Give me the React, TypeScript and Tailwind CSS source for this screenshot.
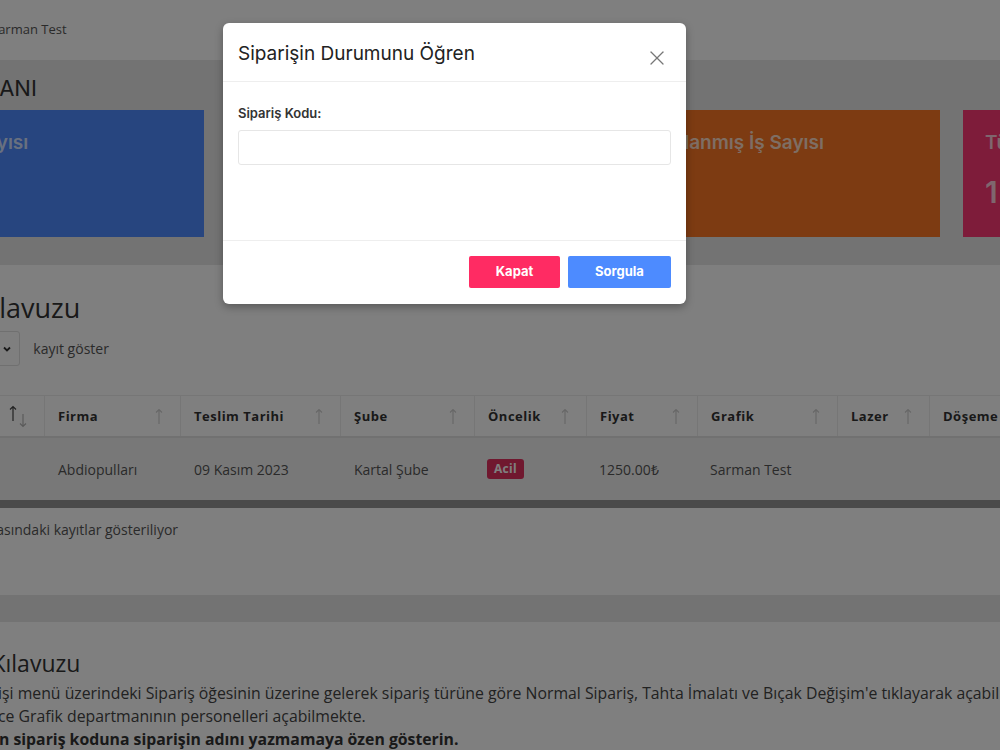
import { X } from "lucide-react";

const COLUMNS = [
  { label: "Sipariş Kodu", width: "w-[165px]", active: true },
  { label: "Firma", width: "w-[136px]" },
  { label: "Teslim Tarihi", width: "w-[160px]" },
  { label: "Şube", width: "w-[134px]" },
  { label: "Öncelik", width: "w-[112px]" },
  { label: "Fiyat", width: "w-[111px]" },
  { label: "Grafik", width: "w-[140px]" },
  { label: "Lazer", width: "w-[92px]" },
  { label: "Döşeme", width: "w-[130px]" },
  { label: "Durum", width: "w-[130px]" },
];

const CARDS = [
  { title: "Toplam İş Sayısı", value: "3", bg: "bg-[#4e8afe]" },
  { title: "Devam Eden İş Sayısı", value: "2", bg: "bg-[#22b573]" },
  { title: "Tamamlanmış İş Sayısı", value: "0", bg: "bg-[#fa7624]" },
  { title: "Tüm Siparişler", value: "1", bg: "bg-[#fc3874]" },
];

function SortArrows({ active }: { active?: boolean }) {
  return (
    <span className="flex items-start gap-[2px]">
      <svg width="8" height="17" viewBox="0 0 8 17" className={active ? "text-[#444]" : "text-[#cfcfcf]"}>
        <path d="M4 1.5 V16 M1 4.5 L4 1.5 L7 4.5" fill="none" stroke="currentColor" strokeWidth="1.2" />
      </svg>
      {active && (
        <svg width="8" height="14" viewBox="0 0 8 14" className="text-[#b5b5b5] mt-[9px]">
          <path d="M4 0 V12.5 M1 9.5 L4 12.5 L7 9.5" fill="none" stroke="currentColor" strokeWidth="1.2" />
        </svg>
      )}
    </span>
  );
}

function OrderTable() {
  return (
    <div className="w-[1400px]">
      <div className="flex h-[43px] border-t border-[#ececec] border-b-2 border-b-[#e2e2e2]">
        {COLUMNS.map((c) => (
          <div
            key={c.label}
            className={`${c.width} shrink-0 flex items-center justify-between pl-[13px] pr-[17px] border-r border-[#ececec] text-[13px] font-bold tracking-[0.5px] text-[#333]`}
          >
            <span className="mt-[2px]">{c.label}</span>
            <SortArrows active={c.active} />
          </div>
        ))}
      </div>
      <div className="flex h-[62px] bg-[#f1f1f1] text-[14px] text-[#555]">
        <div className="w-[165px] shrink-0 flex items-center pl-[13px]">#12</div>
        <div className="w-[136px] shrink-0 flex items-center pl-[13px]">Abdiopulları</div>
        <div className="w-[160px] shrink-0 flex items-center pl-[13px]">09 Kasım 2023</div>
        <div className="w-[134px] shrink-0 flex items-center pl-[13px]">Kartal Şube</div>
        <div className="w-[112px] shrink-0 flex items-center pl-[12px]">
          <span className="bg-[#e0305f] text-white text-[12px] font-bold px-[7px] py-[1px] rounded-[3px] tracking-[0.3px]">
            Acil
          </span>
        </div>
        <div className="w-[111px] shrink-0 flex items-center pl-[12px]">1250.00₺</div>
        <div className="w-[140px] shrink-0 flex items-center pl-[12px]">Sarman Test</div>
        <div className="w-[92px] shrink-0" />
        <div className="w-[130px] shrink-0" />
      </div>
    </div>
  );
}

function StatusModal() {
  return (
    <div className="absolute left-[223px] top-[23px] w-[463px] bg-white rounded-[6px] shadow-[0_3px_9px_rgba(0,0,0,0.3)] font-['Inter',sans-serif]">
      <div className="h-[59px] px-[15px] flex items-center justify-between border-b border-[#eeeeee]">
        <h2 className="mt-[4px] text-[19px] text-[#222] font-normal">Siparişin Durumunu Öğren</h2>
        <button className="mt-[11px] mr-[2px] text-[#777]">
          <X size={24} strokeWidth={1.3} />
        </button>
      </div>
      <div className="px-[15px] pt-[21px] pb-[75px]">
        <label className="block text-[13px] font-semibold text-[#333] leading-[20px] mb-[7px]">Sipariş Kodu:</label>
        <input className="w-full h-[35px] border border-[#e6e6e6] rounded-[3px] outline-none px-3 text-[14px]" />
      </div>
      <div className="border-t border-[#eeeeee] px-[15px] pt-[15px] pb-[16px] flex justify-end gap-[8px]">
        <button className="w-[91px] h-[32px] bg-[#ff2b63] text-white text-[13px] font-bold rounded-[2px]">Kapat</button>
        <button className="w-[103px] h-[32px] bg-[#4d8bff] text-white text-[13px] font-bold rounded-[2px]">Sorgula</button>
      </div>
    </div>
  );
}

export default function App() {
  return (
    <div className="relative w-[1000px] h-[750px] overflow-hidden bg-white font-['Open_Sans',sans-serif]">
      <div className="-ml-[141px] w-[1600px]">
        {/* Top bar */}
        <div className="h-[60px] flex items-center pl-[132px] text-[13px] text-[#555]">Sarman Test</div>

        {/* Stats */}
        <div className="bg-[#e6e6e6] pt-[14px] pb-[28px]">
          <h1 className="pl-[10px] text-[22px] leading-[28px] text-[#333] mb-[8px] font-['Inter',sans-serif]">SİPARİŞ EKRANI</h1>
          <div className="flex gap-[23px]">
            {CARDS.map((c) => (
              <div key={c.title} className={`${c.bg} w-[345px] h-[127px] shrink-0 px-[22px] pt-[20px]`}>
                <p className="text-[19px] font-semibold text-white/75 font-['Inter',sans-serif] leading-[26px]">{c.title}</p>
                <p className="text-[30px] font-semibold text-white/75 font-['Inter',sans-serif] mt-[19px] leading-[34px]">{c.value}</p>
              </div>
            ))}
          </div>
        </div>

        {/* Orders */}
        <div className="bg-white pl-[21px] pt-[27px] h-[330px]">
          <h2 className="pl-[5px] text-[27px] leading-[32px] text-[#333]">Sipariş Kılavuzu</h2>
          <div className="flex items-center gap-[13px] mt-[7px] text-[14px] text-[#555]">
            <span>Sayfada</span>
            <div className="w-[76px] h-[35px] border border-[#e0e0e0] rounded-[3px] flex items-center justify-between pl-[10px] pr-[7px]">
              <span>10</span>
              <svg width="10" height="10" viewBox="0 0 10 10" className="text-[#333]">
                <path d="M2 3.5 L5 6.5 L8 3.5" fill="none" stroke="currentColor" strokeWidth="1.8" />
              </svg>
            </div>
            <span>kayıt göster</span>
          </div>
          <div className="-ml-[21px] mt-[29px] w-[1600px] pl-[21px]">
            <OrderTable />
          </div>
          <div className="-ml-[21px] h-[8px] bg-[#949494] w-[1600px]" />
          <p className="mt-[12px] pl-[4px] text-[14px] leading-[20px] text-[#555]">1 kayıttan 1 - 1 arasındaki kayıtlar gösteriliyor</p>
        </div>

        <div className="h-[27px] bg-[#e6e6e6]" />

        {/* Guide */}
        <div className="bg-white pl-[47px] pt-[26px]">
          <h2 className="pl-[8px] text-[23px] leading-[30px] text-[#333]">Sipariş Kılavuzu</h2>
          <div className="mt-[4px] text-[15.8px] leading-[23px] text-[#444]">
            <p>Yetkili olan kişi menü üzerindeki Sipariş öğesinin üzerine gelerek sipariş türüne göre Normal Sipariş, Tahta İmalatı ve Bıçak Değişim'e tıklayarak açabilir.</p>
            <p>Siparişi sadece Grafik departmanının personelleri açabilmekte.</p>
            <p className="font-bold text-[#333]">Lütfen açılan sipariş koduna siparişin adını yazmamaya özen gösterin.</p>
          </div>
        </div>
      </div>

      <div className="absolute inset-0 bg-black/50" />
      <StatusModal />
    </div>
  );
}
